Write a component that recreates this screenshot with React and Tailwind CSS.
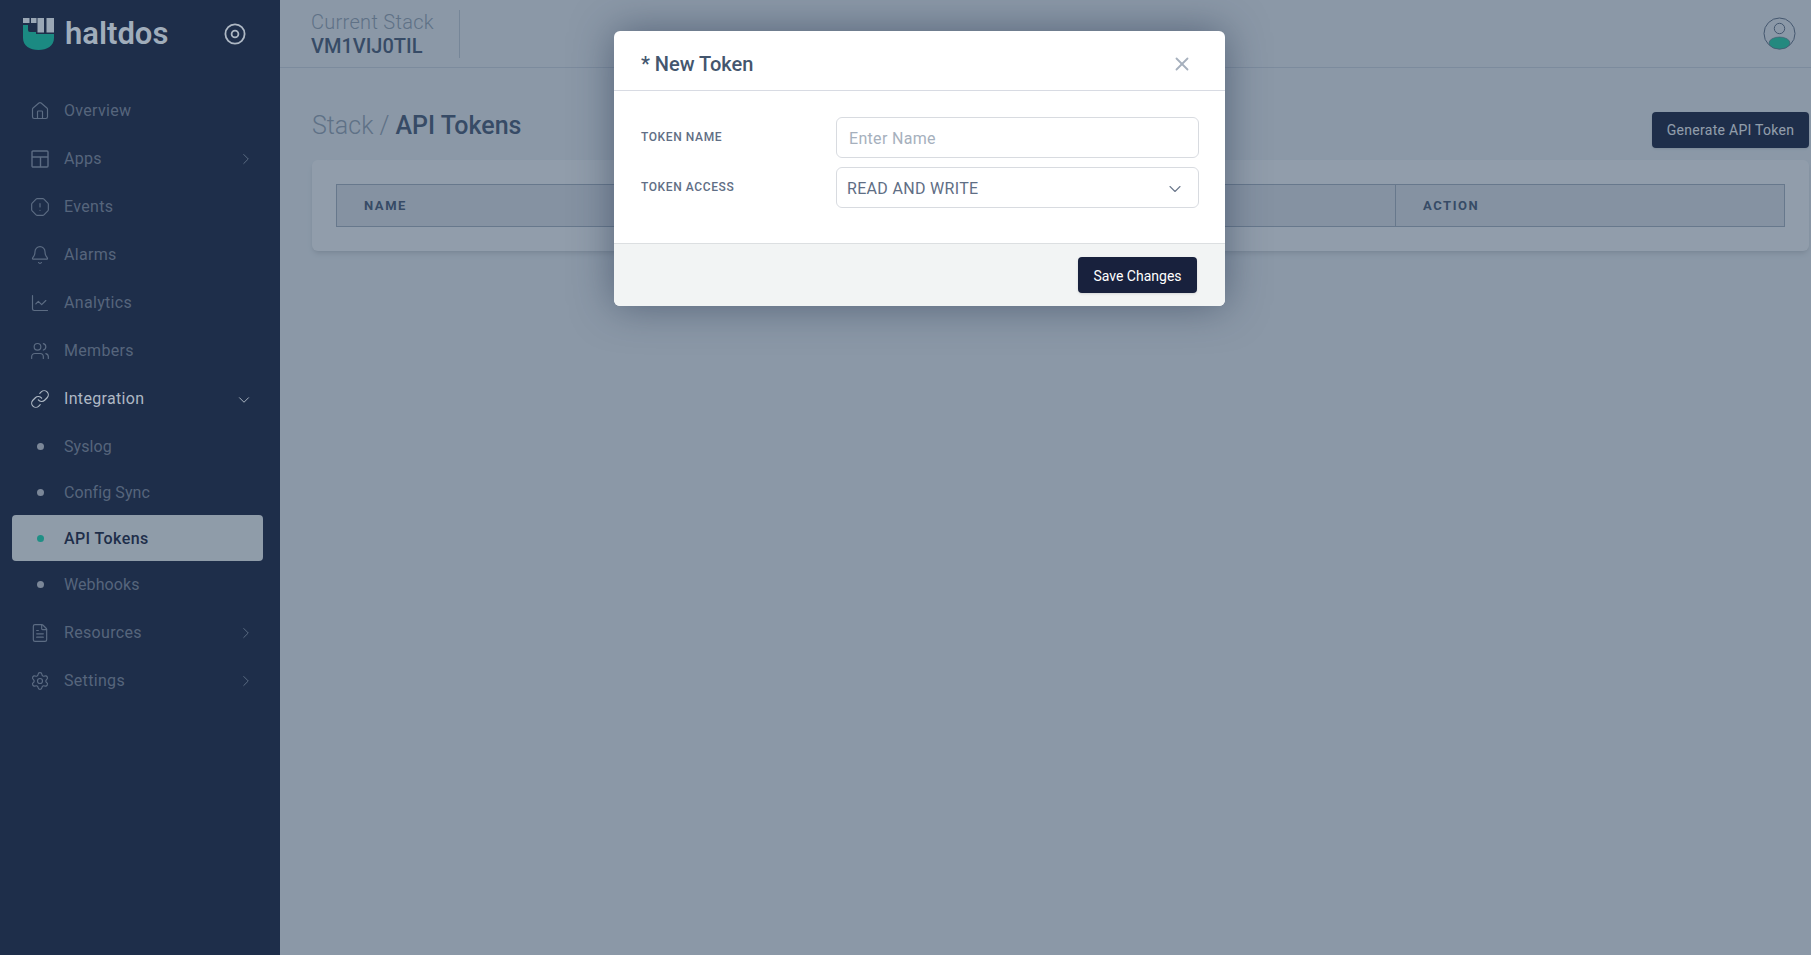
import { Home, Bell, ChartLine, Users, Link, FileText, Settings, ChevronRight, ChevronDown, X, OctagonAlert } from "lucide-react";

const Logo = () => (
  <svg width="31" height="32" viewBox="0 0 31 32" className="shrink-0">
    <path d="M0 7H5V12Q5 14 7 14H13V16H31V20C31 28 24 32 15.5 32C7 32 0 28 0 20Z" fill="#1b8a82" />
    <rect x="0" y="0" width="6.5" height="5" fill="#9aa7b5" />
    <rect x="8" y="0" width="5.5" height="5" fill="#9aa7b5" />
    <rect x="14.5" y="0" width="6.5" height="14.5" fill="#9aa7b5" />
    <rect x="23.5" y="0" width="7.5" height="14.5" fill="#9aa7b5" />
  </svg>
);

const AppsIcon = ({ size, className }) => (
  <svg width={size} height={size} viewBox="0 0 20 20" fill="none" stroke="currentColor" strokeWidth="1.4" className={className}>
    <rect x="2" y="2" width="16" height="16" rx="1" />
    <path d="M2 8h16M10.5 8v10" />
  </svg>
);

const NavItem = ({ icon: Icon, label, arrow, active }) => (
  <div className={`flex items-center h-[48px] pl-[30px] pr-[25px] ${active ? "text-[#aeb8c4]" : "text-[#56657c]"}`}>
    <span className="w-[34px] shrink-0 flex">
      <Icon size={20} strokeWidth={1.4} className={active ? "text-[#aeb8c4]" : "text-[#5c6c83]"} />
    </span>
    <span className="text-[16px] tracking-[0.02em] flex-1">{label}</span>
    {arrow === "right" && <ChevronRight size={18} strokeWidth={1.3} className="text-[#5c6c83]" />}
    {arrow === "down" && <ChevronDown size={18} strokeWidth={1.3} className="text-[#aeb8c4] mt-0.5 mr-[2px]" />}
  </div>
);

const SubItem = ({ label, active }) => (
  <div className={`flex items-center h-[46px] ml-3 mr-[17px] pl-[25px] rounded ${active ? "bg-[#8f9ca9] font-medium text-[#1e2e4a]" : "text-[#56657c]"}`}>
    <span className={`w-[7px] h-[7px] rounded-full mr-[20px] ${active ? "bg-[#1f8f85]" : "bg-[#7b8798]"}`}></span>
    <span className={`text-[16px] pt-[1px] ${active ? "tracking-[0.025em]" : "tracking-[0.005em]"}`}>{label}</span>
  </div>
);

export default function App() {
  return (
    <div className="relative flex h-[955px] w-[1811px] overflow-hidden bg-[#f2f5f7] font-['Roboto','Liberation_Sans',sans-serif]">
      {/* sidebar sits above the modal backdrop */}
      <aside className="relative z-10 w-[280px] shrink-0 bg-[#1e2e4a]">
        <div className="flex items-center justify-between h-[68px] pl-[23px] pr-[34px]">
          <div className="flex items-center">
            <Logo />
            <span className="ml-[11px] text-[31px] font-semibold text-[#a0adbb]">haltdos</span>
          </div>
          <svg width="22" height="22" viewBox="0 0 22 22" fill="none" stroke="#aeb8c4" strokeWidth="1.8">
            <circle cx="11" cy="11" r="9.6" />
            <circle cx="11" cy="11" r="3.4" />
          </svg>
        </div>
        <nav className="mt-[19px]">
          <NavItem icon={Home} label="Overview" />
          <NavItem icon={AppsIcon} label="Apps" arrow="right" />
          <NavItem icon={OctagonAlert} label="Events" />
          <NavItem icon={Bell} label="Alarms" />
          <NavItem icon={ChartLine} label="Analytics" />
          <NavItem icon={Users} label="Members" />
          <NavItem icon={Link} label="Integration" arrow="down" active />
          <SubItem label="Syslog" />
          <SubItem label="Config Sync" />
          <SubItem label="API Tokens" active />
          <SubItem label="Webhooks" />
          <div className="h-[2px]"></div>
          <NavItem icon={FileText} label="Resources" arrow="right" />
          <NavItem icon={Settings} label="Settings" arrow="right" />
        </nav>
      </aside>

      <main className="flex-1 min-w-0">
        <header className="h-[68px] border-b border-[#d5dbe2] flex items-center justify-between pl-[31px] pr-[15px]">
          <div className="h-[48px] border-r border-[#c8d0d9] w-[149px] whitespace-nowrap">
            <div className="text-[20px] leading-[24px] font-light tracking-[0.015em] text-[#9aa7b5]">Current Stack</div>
            <div className="text-[20px] leading-[24px] font-medium text-[#4a5a74]">VM1VIJ0TIL</div>
          </div>
          <svg width="33" height="33" viewBox="0 0 33 33" fill="none">
            <circle cx="16.5" cy="16.5" r="15.5" stroke="#647185" strokeWidth="1" />
            <circle cx="16.5" cy="11.5" r="5.2" stroke="#647185" strokeWidth="1" />
            <ellipse cx="16.5" cy="26" rx="10.5" ry="6" fill="#24d7a7" stroke="#647185" strokeWidth="0.6" />
          </svg>
        </header>

        <div className="flex items-start justify-between pl-[32px] pr-[2px] pt-[44px]">
          <h1 className="-mt-[4px] text-[25px] leading-[36px] font-light text-[#9aa7b5]">
            Stack / <span className="font-medium text-[#4a5a74]">API Tokens</span>
          </h1>
          <button className="h-[36px] w-[157px] rounded bg-[#18213d] text-white text-[14px] tracking-[0.02em] shadow">Generate API Token</button>
        </div>

        <div className="mt-[12px] ml-[32px] mr-[2px] h-[91px] rounded-md bg-white p-6 shadow-md">
          <div className="grid grid-cols-[1059px_1fr] h-[43px] border border-[#aab4c0] bg-[#e6e9ed] text-[#4a5a74] text-[13px] font-bold tracking-[0.12em]">
            <div className="flex items-center pl-[27px] border-r border-[#aab4c0]">NAME</div>
            <div className="flex items-center pl-[27px]">ACTION</div>
          </div>
        </div>
      </main>

      {/* Backdrop */}
      <div className="absolute inset-0 bg-[#243b57]/50"></div>

      {/* Modal */}
      <div className="absolute left-[614px] top-[31px] w-[611px] rounded-md bg-white shadow-[0_0_40px_rgba(30,46,74,0.5)] overflow-hidden">
        <div className="flex items-center justify-between h-[60px] pt-[6px] pl-[27px] pr-[32px] border-b border-[#d8dbe3]">
          <h2 className="text-[20px] font-medium text-[#44566e]">* New Token</h2>
          <X size={22} strokeWidth={2} className="text-[#a6b0bd]" />
        </div>
        <div className="h-[152px] pt-[26px] pl-[27px] pr-[26px] flex flex-col gap-[9px]">
          <div className="flex items-center">
            <label className="w-[195px] text-[12px] font-medium tracking-[0.05em] text-[#5f6e85] -mt-[2px]">TOKEN NAME</label>
            <input placeholder="Enter Name" className="flex-1 h-[41px] rounded-md border border-[#d8dbe0] px-3 pt-[2px] text-[16px] tracking-[0.02em] text-[#44566e] placeholder-[#a6b0bd]" />
          </div>
          <div className="flex items-center">
            <label className="w-[195px] text-[12px] font-medium tracking-[0.05em] text-[#5f6e85] -mt-[2px]">TOKEN ACCESS</label>
            <div className="flex-1 h-[41px] rounded-md border border-[#d8dbe0] pl-[10px] pr-[13px] pt-[2px] flex items-center justify-between text-[16px] tracking-[0.02em] text-[#5f6e85]">
              <span>READ AND WRITE</span>
              <ChevronDown size={20} strokeWidth={1.3} className="text-[#6b788c]" />
            </div>
          </div>
        </div>
        <div className="h-[63px] bg-[#f2f4f4] border-t border-[#dcdfe1] flex items-center justify-end pr-[28px]">
          <button className="h-[36px] w-[119px] rounded bg-[#18213d] pt-[2px] text-white text-[14px] shadow">Save Changes</button>
        </div>
      </div>
    </div>
  );
}
